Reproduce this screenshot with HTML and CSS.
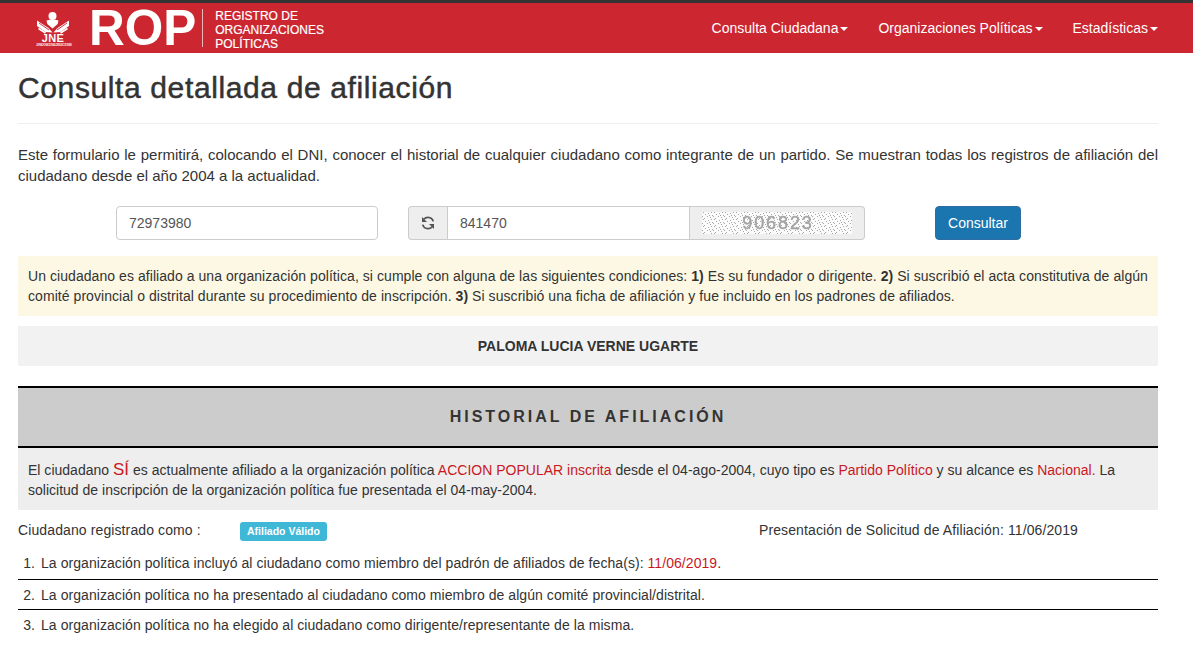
FILE: index.html
```html
<!DOCTYPE html>
<html lang="es">
<head>
<meta charset="utf-8">
<title>Consulta detallada de afiliación</title>
<link rel="stylesheet" href="styles.css">
</head>
<body>
<header class="navbar">
  <div class="brand">
    <svg class="jne" viewBox="34 8 40 38" width="40" height="38" aria-hidden="true">
      <circle cx="52.500" cy="15" r="4" fill="#fff"/>
      <path d="M46.500 19.500q6-1.800 12 0l-.8 3.500-5.200 4.500-5.200-4.500z" fill="#fff"/>
      <path d="M37 19.500l11.500 7.500 4 4.500-7-.5-8.500-6z" fill="#fff"/>
      <path d="M69 19.500l-11.500 7.500-4 4.500 7-.5 8.500-6z" fill="#fff"/>
      <path d="M39 22l10 7M67 22l-10 7" stroke="#cc2630" stroke-width=".9"/>
      <path d="M38.500 27.500l7 4.500M67.500 27.500l-7 4.500" stroke="#fff" stroke-width="1.600"/>
      <text x="53" y="41" class="jne-text">JNE</text>
      <text x="54" y="44.800" class="jne-tiny" textLength="36">JURADO NACIONAL DE ELECCIONES</text>
    </svg>
    <span class="rop">ROP</span>
    <span class="rop-sub">REGISTRO DE<br>ORGANIZACIONES<br>POLÍTICAS</span>
  </div>
  <nav class="menu">
    <a>Consulta Ciudadana<i class="caret"></i></a>
    <a>Organizaciones Políticas<i class="caret"></i></a>
    <a>Estadísticas<i class="caret"></i></a>
  </nav>
</header>
<main class="content">
  <h1>Consulta detallada de afiliación</h1>
  <p class="intro">Este formulario le permitirá, colocando el DNI, conocer el historial de cualquier ciudadano como integrante de un partido. Se muestran todas los registros de afiliación del ciudadano desde el año 2004 a la actualidad.</p>
  <form class="search">
    <input class="field dni" value="72973980">
    <div class="group">
      <span class="addon refresh">
        <svg viewBox="0 0 16 16" width="16" height="16" fill="none" aria-hidden="true">
          <path d="M13.300 6.400A5.500 5.500 0 0 0 3.800 4.300" stroke="#555" stroke-width="1.700"/>
          <path d="M2 1.900v5h5z" fill="#555"/>
          <path d="M2.700 9.600a5.500 5.500 0 0 0 9.500 2.100" stroke="#555" stroke-width="1.700"/>
          <path d="M14 14.100v-5H9z" fill="#555"/>
        </svg>
      </span>
      <input class="field code" value="841470">
      <span class="addon captcha">
        <svg class="captcha-img" viewBox="0 0 150 22" width="150" height="22" role="img" aria-label="Código de verificación">
          <pattern id="stipple" width="11" height="7" patternUnits="userSpaceOnUse">
            <path d="M1 0h1v1H1zM6 1h1v1H6zM9 0h1v1H9zM3 2h1v1H3zM10 3h1v1h-1zM0 4h1v1H0zM5 4h1v1H5zM8 5h1v1H8zM2 6h1v1H2zM7 3h1v1H7z" fill="#a8a8a8"/>
          </pattern>
          <rect width="150" height="22" fill="#fbfbfb"/>
          <rect width="150" height="22" fill="url(#stipple)"/>
          <text x="76" y="17" class="captcha-text">906823</text>
        </svg>
      </span>
    </div>
    <button type="button" class="btn">Consultar</button>
  </form>
  <div class="notice">Un ciudadano es afiliado a una organización política, si cumple con alguna de las siguientes condiciones: <b>1)</b> Es su fundador o dirigente. <b>2)</b> Si suscribió el acta constitutiva de algún comité provincial o distrital durante su procedimiento de inscripción. <b>3)</b> Si suscribió una ficha de afiliación y fue incluido en los padrones de afiliados.</div>
  <div class="person">PALOMA LUCIA VERNE UGARTE</div>
  <h2 class="history">HISTORIAL DE AFILIACIÓN</h2>
  <div class="summary">El ciudadano <span class="red big">SÍ</span> es actualmente afiliado a la organización política <span class="red">ACCION POPULAR inscrita</span> desde el 04-ago-2004, cuyo tipo es <span class="red">Partido Político</span> y su alcance es <span class="red">Nacional.</span> La solicitud de inscripción de la organización política fue presentada el 04-may-2004.</div>
  <div class="status">
    <span class="status-label">Ciudadano registrado como :</span>
    <span class="badge">Afiliado Válido</span>
    <span class="status-date">Presentación de Solicitud de Afiliación: 11/06/2019</span>
  </div>
  <ol class="facts">
    <li><span>La organización política incluyó al ciudadano como miembro del padrón de afiliados de fecha(s): <span class="red">11/06/2019</span>.</span></li>
    <li><span>La organización política no ha presentado al ciudadano como miembro de algún comité provincial/distrital.</span></li>
    <li><span>La organización política no ha elegido al ciudadano como dirigente/representante de la misma.</span></li>
  </ol>
</main>
</body>
</html>
```
FILE: styles.css
```css
* { box-sizing: border-box; }
html, body { margin: 0; height: 100%; }
body {
  font-family: "Liberation Sans", Arial, sans-serif;
  font-size: 14px;
  line-height: 20px;
  color: #333;
  background: #fff;
  overflow: hidden;
}
.navbar {
  height: 53px;
  background: #cc2630;
  border-top: 3px solid #333;
  display: flex;
  justify-content: space-between;
  align-items: center;
  padding: 0 35px;
}
.brand { display: flex; align-items: center; }
.jne { display: block; margin: 0 15px 0 -1px; }
.jne-text {
  font: bold 11px "Liberation Sans", sans-serif;
  fill: #fff;
  text-anchor: middle;
  letter-spacing: .3px;
}
.jne-tiny { font: bold 3px "Liberation Sans", sans-serif; fill: #f6d5d6; text-anchor: middle; }
.rop {
  font-size: 49.500px;
  font-weight: bold;
  line-height: 46px;
  color: #fff;
}
.rop-sub {
  margin-left: 6px;
  padding-left: 12px;
  border-left: 1px solid #e9b5b8;
  color: #fff;
  font-size: 12px;
  line-height: 14px;
  height: 38px;
  -webkit-text-stroke: .2px #fff;
}
.menu { display: flex; gap: 30px; }
.menu a { color: #fff; font-size: 14px; }
.caret {
  display: inline-block;
  margin-left: 2px;
  vertical-align: middle;
  border-top: 4px solid #fff;
  border-left: 4px solid transparent;
  border-right: 4px solid transparent;
}
.content { padding: 0 35px 0 18px; }
h1 {
  margin: 0;
  padding: 18px 0 19px;
  font-size: 30px;
  line-height: 33px;
  font-weight: normal;
  letter-spacing: .62px;
  -webkit-text-stroke: .5px #333;
  border-bottom: 1px solid #eee;
}
.intro {
  margin: 20px 0 0;
  font-size: 15px;
  line-height: 21px;
  text-align: justify;
}
.search {
  display: flex;
  align-items: center;
  margin-top: 20px;
  padding-left: 98px;
}
.field {
  height: 34px;
  padding: 6px 12px;
  font: inherit;
  color: #555;
  background: #fff;
  border: 1px solid #ccc;
  outline: none;
}
.dni { width: 262px; border-radius: 4px; }
.group { display: flex; width: 457px; margin-left: 30px; }
.addon {
  display: flex;
  align-items: center;
  justify-content: center;
  height: 34px;
  background: #eee;
  border: 1px solid #ccc;
}
.refresh { width: 39px; border-radius: 4px 0 0 4px; border-right: 0; }
.code { width: 243px; }
.captcha { flex: 1; border-left: 0; border-radius: 0 4px 4px 0; }
.captcha-img { display: block; }
.captcha-text {
  font: 18px "Liberation Sans", sans-serif;
  fill: #a3a3a3;
  stroke: #a3a3a3;
  stroke-width: .4px;
  text-anchor: middle;
  letter-spacing: 1.900px;
  filter: blur(.4px);
}
.btn {
  margin-left: 70px;
  width: 86px;
  height: 34px;
  font: inherit;
  color: #fff;
  background: #1b75ae;
  border: 1px solid #2e6da4;
  border-radius: 4px;
  padding: 0;
}
.notice {
  margin-top: 16px;
  padding: 10px 8px 10px 10px;
  background: #fcf8e3;
  letter-spacing: .06px;
}
.person {
  margin-top: 10px;
  height: 40px;
  line-height: 40px;
  background: #f2f2f2;
  text-align: center;
  font-weight: bold;
}
.history {
  margin: 20px 0 0;
  height: 62px;
  line-height: 58px;
  background: #ccc;
  border-top: 2px solid #000;
  border-bottom: 2px solid #000;
  text-align: center;
  font-size: 16px;
  font-weight: bold;
  letter-spacing: 3px;
}
.summary {
  padding: 12px 10px 0;
  height: 62px;
  background: #eee;
  letter-spacing: .01px;
}
.red { color: #c9181f; }
.big { font-size: 17px; line-height: 1; }
.status {
  display: flex;
  align-items: center;
  margin-top: 11px;
  height: 20px;
  letter-spacing: .11px;
}
.status-label { width: 222px; margin-bottom: 2px; }
.badge {
  width: 87px;
  height: 19px;
  line-height: 19px;
  text-align: center;
  background: #3fb8d8;
  border-radius: 3px;
  color: #fff;
  font-size: 10.500px;
  font-weight: bold;
  letter-spacing: 0;
}
.status-date { margin: 0 0 2px 432px; }
.facts { margin: 0; padding: 0; list-style: none; counter-reset: fact; letter-spacing: .06px; }
.facts li {
  display: flex;
  height: 30px;
  padding-top: 5px;
  border-bottom: 1px solid #000;
  counter-increment: fact;
}
.facts li::before {
  content: counter(fact) ".";
  flex: none;
  box-sizing: border-box;
  width: 23px;
  padding-right: 6px;
  text-align: right;
}
.facts li:first-child { height: 39px; padding-top: 12px; }
.facts li:last-child { border-bottom: 0; }
```
